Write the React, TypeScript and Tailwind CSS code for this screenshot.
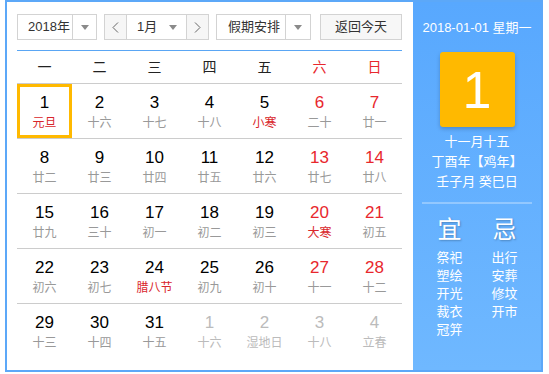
const days = [
  [
    { d: "1", l: "元旦", hl: true, today: true },
    { d: "2", l: "十六" },
    { d: "3", l: "十七" },
    { d: "4", l: "十八" },
    { d: "5", l: "小寒", hl: true },
    { d: "6", l: "二十" },
    { d: "7", l: "廿一" },
  ],
  [
    { d: "8", l: "廿二" },
    { d: "9", l: "廿三" },
    { d: "10", l: "廿四" },
    { d: "11", l: "廿五" },
    { d: "12", l: "廿六" },
    { d: "13", l: "廿七" },
    { d: "14", l: "廿八" },
  ],
  [
    { d: "15", l: "廿九" },
    { d: "16", l: "三十" },
    { d: "17", l: "初一" },
    { d: "18", l: "初二" },
    { d: "19", l: "初三" },
    { d: "20", l: "大寒", hl: true },
    { d: "21", l: "初五" },
  ],
  [
    { d: "22", l: "初六" },
    { d: "23", l: "初七" },
    { d: "24", l: "腊八节", hl: true },
    { d: "25", l: "初九" },
    { d: "26", l: "初十" },
    { d: "27", l: "十一" },
    { d: "28", l: "十二" },
  ],
  [
    { d: "29", l: "十三" },
    { d: "30", l: "十四" },
    { d: "31", l: "十五" },
    { d: "1", l: "十六", other: true },
    { d: "2", l: "湿地日", other: true },
    { d: "3", l: "十八", other: true },
    { d: "4", l: "立春", other: true },
  ],
];

const weekdays = ["一", "二", "三", "四", "五", "六", "日"];

type Day = { d: string; l: string; hl?: boolean; today?: boolean; other?: boolean };

const Arrow = () => (
  <span className="h-0 w-0 border-x-[4px] border-t-[5px] border-x-transparent border-t-[#8a8a8a]" />
);

const Chevron = ({ left }: { left?: boolean }) => (
  <svg width="7" height="11" viewBox="0 0 7 11">
    <polyline
      points={left ? "6,0.5 1,5.5 6,10.5" : "1,0.5 6,5.5 1,10.5"}
      fill="none"
      stroke="#666"
      strokeWidth="1"
    />
  </svg>
);

const DayCell = ({ day, col }: { day: Day; col: number }) => {
  const weekend = col >= 5;
  let numColor = "text-black";
  if (day.other) numColor = "text-[#bbbbbb]";
  else if (weekend) numColor = "text-[#e8272d]";
  let lunarColor = "text-[#999999]";
  if (day.other) lunarColor = "text-[#bbbbbb]";
  else if (day.hl) lunarColor = "text-[#d9262b]";

  return (
    <div
      className={`flex flex-col items-center ${
        day.today ? "border-[3px] border-[#ffb900] pt-[6px]" : "pt-[9px]"
      }`}
    >
      <span className={`text-[17px] leading-[20px] ${numColor}`}>{day.d}</span>
      <span className={`mt-[2px] text-[12px] leading-[16px] ${lunarColor}`}>{day.l}</span>
    </div>
  );
};

export default function App() {
  return (
    <div
      className="h-[374px] w-[549px] bg-white"
      style={{ fontFamily: "'Liberation Sans', 'Noto Sans CJK SC', sans-serif" }}
    >
      <div className="ml-[5px] flex h-[372px] w-[538px] border-2 border-[#5ca8f8]">
        {/* left: calendar */}
        <div className="w-[406px] bg-white pl-[10px] pr-[11px] pt-3">
          <div className="flex h-[26px] text-[13px] text-[#333]">
            <div className="flex w-[80px] border border-[#d3d3d3]">
              <div className="flex flex-1 items-center pl-[10px]">2018年</div>
              <div className="flex w-[24px] items-center justify-center border-l border-[#d3d3d3]">
                <Arrow />
              </div>
            </div>
            <div className="ml-[7px] flex w-[105px] border border-[#d3d3d3]">
              <div className="flex w-[21px] items-center justify-center bg-[#f6f6f6]">
                <Chevron left />
              </div>
              <div className="flex flex-1 items-center border-x border-[#d3d3d3] pl-[10px]">
                <span className="flex-1">1月</span>
                <span className="mr-[9px] flex">
                  <Arrow />
                </span>
              </div>
              <div className="flex w-[21px] items-center justify-center bg-[#f6f6f6]">
                <Chevron />
              </div>
            </div>
            <div className="ml-[7px] flex w-[95px] border border-[#d3d3d3]">
              <div className="flex flex-1 items-center pl-[11px]">假期安排</div>
              <div className="flex w-[25px] items-center justify-center border-l border-[#d3d3d3]">
                <Arrow />
              </div>
            </div>
            <div className="ml-[9px] flex w-[82px] items-center justify-center border border-[#d3d3d3] bg-[#f7f7f7]">
              返回今天
            </div>
          </div>

          <div className="mt-[10px] h-px bg-[#5aa6f4]" />

          <div className="grid h-[33px] grid-cols-7 border-b border-[#cccccc] text-[14px]">
            {weekdays.map((w, i) => (
              <div
                key={w}
                className={`flex items-center justify-center ${i >= 5 ? "text-[#e8272d]" : "text-[#222]"}`}
              >
                {w}
              </div>
            ))}
          </div>

          {days.map((row, r) => (
            <div
              key={r}
              className={`grid h-[55px] grid-cols-7 ${r < days.length - 1 ? "border-b border-[#cccccc]" : ""}`}
            >
              {row.map((day, c) => (
                <DayCell key={c} day={day} col={c} />
              ))}
            </div>
          ))}
        </div>

        {/* right: today detail */}
        <div className="flex w-[128px] flex-col items-center bg-gradient-to-b from-[#58a8fe] to-[#6fb8ff] text-white">
          <div className="mt-[17px] text-[13px] leading-[18px]">2018-01-01 星期一</div>
          <div className="mt-[15px] flex h-[75px] w-[75px] items-center justify-center rounded-[3px] bg-[#ffb900] shadow-[0_2px_4px_rgba(0,0,0,0.2)]">
            <span className="text-[52px] font-light leading-none">1</span>
          </div>
          <div className="mt-[5px] flex flex-col items-center text-[13px] leading-[20px]">
            <span>十一月十五</span>
            <span>丁酉年【鸡年】</span>
            <span>壬子月 癸巳日</span>
          </div>
          <div className="mt-[10px] h-[2px] w-[110px] bg-white/30" />
          <div className="mt-[12px] flex">
            <div className="flex w-[55px] flex-col items-center">
              <span className="text-[24px] leading-[28px] [text-shadow:1px_1px_2px_rgba(0,0,0,0.25)]">宜</span>
              <div className="mt-[5px] flex flex-col text-[13px] leading-[18px]">
                <span>祭祀</span>
                <span>塑绘</span>
                <span>开光</span>
                <span>裁衣</span>
                <span>冠笄</span>
              </div>
            </div>
            <div className="flex w-[55px] flex-col items-center">
              <span className="text-[24px] leading-[28px] [text-shadow:1px_1px_2px_rgba(0,0,0,0.25)]">忌</span>
              <div className="mt-[5px] flex flex-col text-[13px] leading-[18px]">
                <span>出行</span>
                <span>安葬</span>
                <span>修坟</span>
                <span>开市</span>
              </div>
            </div>
          </div>
        </div>
      </div>
    </div>
  );
}
